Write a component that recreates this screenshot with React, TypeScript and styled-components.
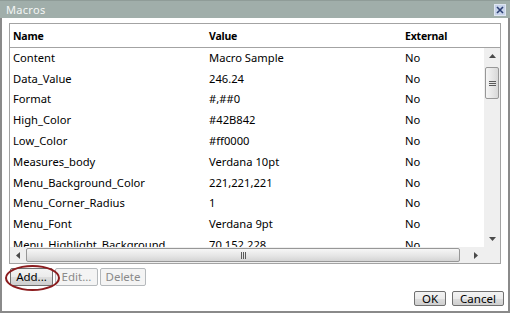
import React from "react";
import styled, { createGlobalStyle } from "styled-components";

const Global = createGlobalStyle`
  html, body { margin: 0; padding: 0; background: #ffffff; }
  body { font-family: "Noto Sans", "Open Sans", sans-serif; }
`;

const Dialog = styled.div`
  width: 510px;
  height: 313px;
  box-sizing: border-box;
  border: 2px solid #8a8a8a;
  border-top: none;
  display: flex;
  flex-direction: column;
  background: #fff;
  position: relative;
`;

const TitleBar = styled.div`
  height: 18px;
  margin: 0 -2px;
  background: #a0aeaa;
  border-top: 1px solid #8f9c98;
  box-sizing: border-box;
  display: flex;
  align-items: center;
  justify-content: space-between;
  padding: 0 4px 0 6px;
  color: #f4f6f5;
  font-size: 11px;
  letter-spacing: 0.3px;
`;

const CloseBtn = styled.div`
  width: 12px;
  height: 12px;
  box-sizing: border-box;
  border: 1px solid #dfe6f2;
  background: #c7d3ea;
  display: flex;
  align-items: center;
  justify-content: center;
`;

const Body = styled.div`
  flex: 1;
  display: flex;
  flex-direction: column;
  padding: 5px 4px 5px 7px;
`;

const Grid = styled.div`
  height: 241px;
  margin-right: 3px;
  border: 1px solid #a3a3a3;
  display: flex;
  flex-direction: column;
  box-sizing: border-box;
`;

const HeaderRow = styled.div`
  height: 24px;
  flex: none;
  display: grid;
  grid-template-columns: 196px 196px 1fr;
  align-items: center;
  border-bottom: 1px solid #a3a3a3;
  font-weight: 700;
  font-size: 10.5px;
  letter-spacing: -0.2px;
  color: #000;
  padding-left: 3px;
  box-sizing: border-box;
`;

const Main = styled.div`
  flex: 1;
  display: flex;
  overflow: hidden;
`;

const Rows = styled.div`
  flex: 1;
  overflow: hidden;
  margin-top: -1px;
`;

const Row = styled.div`
  height: 20.8px;
  display: grid;
  grid-template-columns: 196px 196px 1fr;
  align-items: center;
  padding-left: 3px;
  font-size: 11.2px;
  color: #000;
  white-space: nowrap;
`;

const Cell = styled.div`
  overflow: visible;
`;

const VScroll = styled.div`
  width: 16px;
  flex: none;
  background: #efefef;
  display: flex;
  flex-direction: column;
  align-items: center;
`;

const ArrowBox = styled.div`
  width: 16px;
  height: 16px;
  display: flex;
  align-items: center;
  justify-content: center;
  flex: none;
`;

const VThumb = styled.div`
  width: 14px;
  height: 32px;
  margin-top: 3px;
  box-sizing: border-box;
  border: 1px solid #979797;
  border-radius: 2px;
  background: linear-gradient(to right, #f5f5f5, #e4e4e4 60%, #d8d8d8);
  display: flex;
  align-items: center;
  justify-content: center;
`;

const Spacer = styled.div`
  flex: 1;
`;

const HScrollRow = styled.div`
  height: 16px;
  flex: none;
  display: flex;
`;

const HScroll = styled.div`
  flex: 1;
  background: #efefef;
  display: flex;
  align-items: center;
`;

const HThumb = styled.div`
  flex: 1;
  height: 14px;
  margin-right: 8px;
  box-sizing: border-box;
  border: 1px solid #979797;
  border-radius: 2px;
  background: linear-gradient(to bottom, #f6f6f6, #e6e6e6 55%, #d4d4d4);
  display: flex;
  align-items: center;
  justify-content: center;
`;

const Corner = styled.div`
  width: 16px;
  background: #efefef;
`;

const ActionBar = styled.div`
  display: flex;
  gap: 2px;
  margin-top: 4px;
  padding-left: 1px;
  position: relative;
`;

const Button = styled.button<{ $disabled?: boolean; $w: number; $h?: number }>`
  width: ${(p) => p.$w}px;
  height: ${(p) => p.$h ?? 18}px;
  padding: 0;
  box-sizing: border-box;
  font-family: "Noto Sans", "Open Sans", sans-serif;
  font-size: 11.5px;
  border-radius: 2px;
  border: 1px solid ${(p) => (p.$disabled ? "#b5b9bc" : "#707070")};
  color: ${(p) => (p.$disabled ? "#8a8a8a" : "#000")};
  background: ${(p) =>
    p.$disabled
      ? "#f4f4f4"
      : "linear-gradient(to bottom, #f3f3f3 0%, #ebebeb 50%, #dddddd 51%, #cfcfcf 100%)"};
  line-height: 14px;
`;

const Ellipse = styled.div`
  position: absolute;
  left: -4px;
  top: -3px;
  width: 55px;
  height: 26px;
  border: 2px solid #8b1c1e;
  border-radius: 50%;
  box-sizing: border-box;
  pointer-events: none;
`;

const Footer = styled.div`
  margin-top: auto;
  display: flex;
  justify-content: flex-end;
  gap: 6px;
`;

const rows: [string, string, string][] = [
  ["Content", "Macro Sample", "No"],
  ["Data_Value", "246.24", "No"],
  ["Format", "#,##0", "No"],
  ["High_Color", "#42B842", "No"],
  ["Low_Color", "#ff0000", "No"],
  ["Measures_body", "Verdana 10pt", "No"],
  ["Menu_Background_Color", "221,221,221", "No"],
  ["Menu_Corner_Radius", "1", "No"],
  ["Menu_Font", "Verdana 9pt", "No"],
  ["Menu_Highlight_Background", "70,152,228", "No"],
];

const Tri = ({ dir }: { dir: "up" | "down" | "left" | "right" }) => {
  const pts = {
    up: "1,6 4.5,2 8,6",
    down: "1,2 4.5,6 8,2",
    left: "6,1 2,4.5 6,8",
    right: "2,1 6,4.5 2,8",
  }[dir];
  return (
    <svg width="9" height="9" viewBox="0 0 9 9">
      <polygon points={pts} fill="#4a4a4a" />
    </svg>
  );
};

export default function App() {
  return (
    <>
      <Global />
      <Dialog>
        <TitleBar>
          <span>Macros</span>
          <CloseBtn>
            <svg width="8" height="8" viewBox="0 0 8 8">
              <path d="M1 1 L7 7 M7 1 L1 7" stroke="#2c3f73" strokeWidth="1.6" />
            </svg>
          </CloseBtn>
        </TitleBar>
        <Body>
          <Grid>
            <HeaderRow>
              <Cell>Name</Cell>
              <Cell>Value</Cell>
              <Cell>External</Cell>
            </HeaderRow>
            <Main>
              <Rows>
                {rows.map((r) => (
                  <Row key={r[0]}>
                    <Cell>{r[0]}</Cell>
                    <Cell>{r[1]}</Cell>
                    <Cell>{r[2]}</Cell>
                  </Row>
                ))}
              </Rows>
              <VScroll>
                <ArrowBox>
                  <Tri dir="up" />
                </ArrowBox>
                <VThumb>
                  <svg width="7" height="7" viewBox="0 0 7 7">
                    <path d="M0 1.5 H7 M0 3.5 H7 M0 5.5 H7" stroke="#5a5a5a" strokeWidth="1" />
                  </svg>
                </VThumb>
                <Spacer />
                <ArrowBox>
                  <Tri dir="down" />
                </ArrowBox>
              </VScroll>
            </Main>
            <HScrollRow>
              <HScroll>
                <ArrowBox>
                  <Tri dir="left" />
                </ArrowBox>
                <HThumb>
                  <svg width="7" height="7" viewBox="0 0 7 7">
                    <path d="M1.5 0 V7 M3.5 0 V7 M5.5 0 V7" stroke="#5a5a5a" strokeWidth="1" />
                  </svg>
                </HThumb>
                <ArrowBox>
                  <Tri dir="right" />
                </ArrowBox>
              </HScroll>
              <Corner />
            </HScrollRow>
          </Grid>
          <ActionBar>
            <Button $w={43}>Add...</Button>
            <Button $w={43} $disabled>
              Edit...
            </Button>
            <Button $w={46} $disabled>
              Delete
            </Button>
            <Ellipse />
          </ActionBar>
          <Footer>
            <Button $w={32} $h={15}>
              OK
            </Button>
            <Button $w={52} $h={15}>
              Cancel
            </Button>
          </Footer>
        </Body>
      </Dialog>
    </>
  );
}
